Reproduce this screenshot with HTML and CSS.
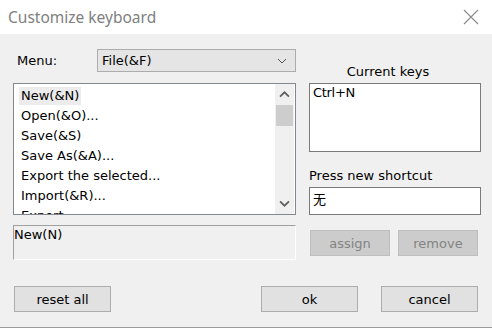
FILE: index.html
```html
<!DOCTYPE html>
<html lang="en">
<head>
    <meta charset="UTF-8">
    <title>Customize keyboard</title>
    <link rel="stylesheet" href="styles.css">
</head>
<body>
<div class="dialog">
    <header class="titlebar">
        <span class="title">Customize keyboard</span>
        <svg class="close" width="16" height="16" viewBox="0 0 16 16">
            <path d="M1 1L15 15M15 1L1 15" stroke="#8a8a8a" stroke-width="1.1" fill="none"/>
        </svg>
    </header>
    <div class="content">
        <div class="left">
            <div class="menu-row">
                <span class="menu-label">Menu:</span>
                <div class="select">
                    <span>File(&amp;F)</span>
                    <svg width="10" height="6" viewBox="0 0 10 6"><path d="M1 1L5 5L9 1" stroke="#555" fill="none"/></svg>
                </div>
            </div>
            <div class="listbox">
                <ul class="items">
                    <li><span class="sel">New(&amp;N)</span></li>
                    <li>Open(&amp;O)...</li>
                    <li>Save(&amp;S)</li>
                    <li>Save As(&amp;A)...</li>
                    <li>Export the selected...</li>
                    <li>Import(&amp;R)...</li>
                    <li>Export...</li>
                </ul>
                <div class="scrollbar">
                    <svg class="arrow" width="17" height="17" viewBox="0 0 17 17"><path d="M4.5 10.5L8.5 6.5L12.5 10.5" stroke="#606060" stroke-width="1.6" fill="none"/></svg>
                    <div class="track"><div class="thumb"></div></div>
                    <svg class="arrow" width="17" height="17" viewBox="0 0 17 17"><path d="M4.5 6.5L8.5 10.5L12.5 6.5" stroke="#606060" stroke-width="1.6" fill="none"/></svg>
                </div>
            </div>
            <div class="desc">New(N)</div>
        </div>
        <div class="right">
            <div class="cur-label">Current keys</div>
            <div class="keys">Ctrl+N</div>
            <div class="press-label">Press new shortcut</div>
            <div class="shortcut">无</div>
            <div class="actions">
                <button class="btn disabled">assign</button>
                <button class="btn disabled">remove</button>
            </div>
        </div>
    </div>
    <footer class="footer">
        <button class="btn wide">reset all</button>
        <div class="spacer"></div>
        <button class="btn wide">ok</button>
        <button class="btn wide">cancel</button>
    </footer>
</div>
</body>
</html>
```

FILE: styles.css
```css
body {
    margin: 0;
    font-family: 'DejaVu Sans', Verdana, sans-serif;
    font-size: 13px;
    color: #000;
    background-color: #f0f0f0;
}

.dialog {
    width: 492px;
    height: 328px;
    box-sizing: border-box;
    border-bottom: 1px solid #9a9a9a;
    display: flex;
    flex-direction: column;
}

.titlebar {
    height: 34px;
    background-color: #fff;
    display: flex;
    align-items: center;
    justify-content: space-between;
    padding: 0 13px 0 8px;
}

.title {
    font-family: 'Noto Sans', 'Open Sans', sans-serif;
    font-size: 15.5px;
    color: #808080;
}

.content {
    display: flex;
    padding: 15px 0 0 13px;
}

.left {
    width: 283px;
    display: flex;
    flex-direction: column;
}

.menu-row {
    display: flex;
    align-items: center;
    height: 23px;
}

.menu-label {
    width: 84px;
    padding-left: 4px;
    box-sizing: border-box;
}

.select {
    flex: 1;
    height: 23px;
    box-sizing: border-box;
    background-color: #e5e5e5;
    border: 1px solid #acacac;
    display: flex;
    align-items: center;
    justify-content: space-between;
    padding: 0 8px 0 4px;
}

.listbox {
    margin-top: 11px;
    height: 132px;
    box-sizing: border-box;
    border: 1px solid #828790;
    background-color: #fff;
    display: flex;
    overflow: hidden;
}

.items {
    flex: 1;
    list-style: none;
    margin: 0;
    padding: 2px 0 0 7px;
}

.items li {
    height: 20px;
    line-height: 20px;
    white-space: nowrap;
}

.items .sel {
    display: inline-block;
    background-color: #ececec;
    line-height: 18px;
    padding: 0 2px;
    margin-left: -2px;
}

.scrollbar {
    width: 19px;
    background-color: #f0f0f0;
    display: flex;
    flex-direction: column;
    margin-right: 1px;
}

.arrow {
    width: 19px;
    height: 21px;
}

.track {
    flex: 1;
}

.thumb {
    height: 21px;
    background-color: #cdcdcd;
    margin: 0 1px;
}

.desc {
    margin-top: 10px;
    height: 35px;
    box-sizing: border-box;
    border: 1px solid #fff;
    border-top-color: #a0a0a0;
    border-left-color: #a0a0a0;
    line-height: 18px;
    padding-left: 0;
}

.right {
    width: 172px;
    margin-left: 13px;
    display: flex;
    flex-direction: column;
}

.cur-label {
    margin-top: 14px;
    height: 20px;
    line-height: 18px;
    text-align: center;
    padding-right: 14px;
}

.keys {
    height: 69px;
    box-sizing: border-box;
    border: 1px solid #7a7a7a;
    background-color: #fff;
    padding: 1px 3px;
    letter-spacing: -0.3px;
}

.press-label {
    margin-top: 14px;
    height: 20px;
    line-height: 20px;
}

.shortcut {
    margin-top: 1px;
    height: 28px;
    box-sizing: border-box;
    border: 1px solid #7a7a7a;
    background-color: #fff;
    padding: 2px 3px;
    font-family: 'Noto Sans CJK SC', sans-serif;
    font-size: 13px;
    line-height: 18px;
}

.actions {
    margin-top: 15px;
    display: flex;
    gap: 8px;
    padding-left: 1px;
}

.btn {
    font-family: inherit;
    font-size: 13px;
    height: 26px;
    box-sizing: border-box;
    background-color: #e1e1e1;
    border: 1px solid #adadad;
    color: #000;
    padding: 0;
}

.actions .btn {
    width: 80px;
}

.btn.disabled {
    background-color: #cccccc;
    border-color: #bfbfbf;
    color: #838383;
}

.footer {
    margin-top: auto;
    margin-bottom: 15px;
    display: flex;
    padding: 0 14px;
    gap: 23px;
}

.btn.wide {
    width: 97px;
}

.spacer {
    flex: 1;
}
```
